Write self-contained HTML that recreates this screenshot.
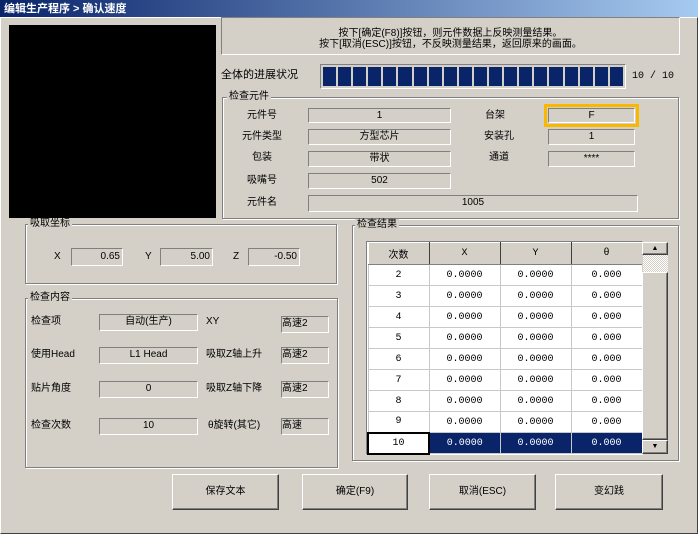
<!DOCTYPE html>
<html><head><meta charset="utf-8"><style>
*{box-sizing:border-box;margin:0;padding:0}
body{width:698px;height:534px;background:#d4d0c8;position:relative;overflow:hidden;font-family:"Liberation Sans","Noto Sans CJK SC",sans-serif;font-size:10px;color:#000}
.a{position:absolute}
.t{position:absolute;white-space:nowrap;line-height:12px}
.f{position:absolute;border:1px solid;border-color:#808080 #fff #fff #808080;text-align:center;line-height:13px;white-space:nowrap}
.g{position:absolute;border:1px solid #808080;box-shadow:1px 1px 0 #fff inset,1px 1px 0 #fff}
.gt{position:absolute;background:#d4d0c8;padding:0 2px;line-height:12px;top:-7px;left:4px}
.b{position:absolute;border:1px solid;border-color:#fff #404040 #404040 #fff;box-shadow:inset -1px -1px 0 #808080;text-align:center;line-height:33px}
table{border-collapse:collapse;position:absolute;left:367px;top:242px;background:#fff;table-layout:fixed;width:274px}
td{border:1px solid #c8c8c8;height:21px;text-align:center;font-family:"Liberation Mono","Noto Sans CJK SC",monospace;font-size:10px;overflow:hidden}
tr.h td{background:#d4d0c8;border-color:#fff #404040 #808080 #fff;height:22px}
tr.s td{background:#0a246a;color:#fff}
</style></head><body>
<div class="a" style="left:0;top:0;width:698px;height:17px;background:linear-gradient(90deg,#0a246a,#a6caf0)"></div>
<div class="t" style="left:4px;top:3px;color:#fff;font-weight:bold;font-size:11px">编辑生产程序 &gt; 确认速度</div>
<div class="a" style="left:0;top:17px;width:698px;height:517px;border:1px solid;border-color:#fff #404040 #404040 #fff"></div>
<div class="a" style="left:9px;top:25px;width:207px;height:193px;background:#000"></div>
<div class="a" style="left:221px;top:17px;width:459px;height:38px;border:1px solid;border-color:#808080 #fff #fff #808080"></div>
<div class="t" style="left:221px;top:28px;width:459px;text-align:center;line-height:11px">按下[确定(F8)]按钮，则元件数据上反映测量结果。<br>按下[取消(ESC)]按钮，不反映测量结果，返回原来的画面。</div>
<div class="t" style="left:221px;top:69px;font-size:11px">全体的进展状况</div>
<div class="a" style="left:320px;top:64px;width:306px;height:25px;border:1px solid;border-color:#808080 #fff #fff #808080;padding:2px;display:flex;gap:2px">
<div style="flex:1;background:#0a246a"></div><div style="flex:1;background:#0a246a"></div><div style="flex:1;background:#0a246a"></div><div style="flex:1;background:#0a246a"></div><div style="flex:1;background:#0a246a"></div><div style="flex:1;background:#0a246a"></div><div style="flex:1;background:#0a246a"></div><div style="flex:1;background:#0a246a"></div><div style="flex:1;background:#0a246a"></div><div style="flex:1;background:#0a246a"></div><div style="flex:1;background:#0a246a"></div><div style="flex:1;background:#0a246a"></div><div style="flex:1;background:#0a246a"></div><div style="flex:1;background:#0a246a"></div><div style="flex:1;background:#0a246a"></div><div style="flex:1;background:#0a246a"></div><div style="flex:1;background:#0a246a"></div><div style="flex:1;background:#0a246a"></div><div style="flex:1;background:#0a246a"></div><div style="flex:1;background:#0a246a"></div></div>
<div class="t" style="left:632px;top:71px;font-family:'Liberation Mono',monospace">10 / 10</div>

<div class="g" style="left:222px;top:97px;width:457px;height:122px"><span class="gt">检查元件</span></div>
<div class="t" style="left:240px;top:110px;width:44px;text-align:center">元件号</div>
<div class="f" style="left:308px;top:108px;width:143px;height:15px">1</div>
<div class="t" style="left:480px;top:110px;width:30px;text-align:center">台架</div>
<div class="a" style="left:544px;top:104px;width:95px;height:23px;border:3px solid #f8b800"></div>
<div class="f" style="left:548px;top:108px;width:87px;height:15px">F</div>
<div class="t" style="left:240px;top:131px;width:44px;text-align:center">元件类型</div>
<div class="f" style="left:308px;top:129px;width:143px;height:16px">方型芯片</div>
<div class="t" style="left:480px;top:131px;width:38px;text-align:center">安装孔</div>
<div class="f" style="left:548px;top:129px;width:87px;height:16px">1</div>
<div class="t" style="left:240px;top:152px;width:44px;text-align:center">包装</div>
<div class="f" style="left:308px;top:151px;width:143px;height:16px">带状</div>
<div class="t" style="left:480px;top:152px;width:38px;text-align:center">通道</div>
<div class="f" style="left:548px;top:151px;width:87px;height:16px">****</div>
<div class="t" style="left:240px;top:175px;width:44px;text-align:center">吸嘴号</div>
<div class="f" style="left:308px;top:173px;width:143px;height:16px">502</div>
<div class="t" style="left:240px;top:197px;width:44px;text-align:center">元件名</div>
<div class="f" style="left:308px;top:195px;width:330px;height:17px">1005</div>

<div class="g" style="left:25px;top:224px;width:312px;height:60px"><span class="gt" style="left:2px">吸取坐标</span></div>
<div class="t" style="left:54px;top:251px">X</div>
<div class="f" style="left:71px;top:248px;width:52px;height:18px;text-align:right;padding-right:2px;line-height:16px">0.65</div>
<div class="t" style="left:145px;top:251px">Y</div>
<div class="f" style="left:160px;top:248px;width:53px;height:18px;text-align:right;padding-right:2px;line-height:16px">5.00</div>
<div class="t" style="left:233px;top:251px">Z</div>
<div class="f" style="left:248px;top:248px;width:52px;height:18px;text-align:right;padding-right:2px;line-height:16px">-0.50</div>

<div class="g" style="left:25px;top:298px;width:313px;height:170px"><span class="gt" style="left:2px">检查内容</span></div>
<div class="t" style="left:31px;top:316px">检查项</div>
<div class="f" style="left:99px;top:314px;width:99px;height:17px">自动(生产)</div>
<div class="t" style="left:206px;top:316px">XY</div>
<div class="f" style="left:281px;top:316px;width:48px;height:17px;text-align:left">高速2</div>
<div class="t" style="left:31px;top:349px">使用Head</div>
<div class="f" style="left:99px;top:347px;width:99px;height:17px">L1 Head</div>
<div class="t" style="left:206px;top:349px">吸取Z轴上升</div>
<div class="f" style="left:281px;top:347px;width:48px;height:17px;text-align:left">高速2</div>
<div class="t" style="left:31px;top:383px">贴片角度</div>
<div class="f" style="left:99px;top:381px;width:99px;height:17px">0</div>
<div class="t" style="left:206px;top:383px">吸取Z轴下降</div>
<div class="f" style="left:281px;top:381px;width:48px;height:17px;text-align:left">高速2</div>
<div class="t" style="left:31px;top:420px">检查次数</div>
<div class="f" style="left:99px;top:418px;width:99px;height:17px">10</div>
<div class="t" style="left:208px;top:420px">θ旋转(其它)</div>
<div class="f" style="left:281px;top:418px;width:48px;height:17px;text-align:left">高速</div>

<div class="g" style="left:352px;top:225px;width:327px;height:236px"><span class="gt" style="left:2px">检查结果</span></div>
<div class="a" style="left:366px;top:241px;width:277px;height:214px;border:1px solid;border-color:#808080 #fff #fff #808080;background:#fff"></div>
<table>
<colgroup><col style="width:61px"><col style="width:71px"><col style="width:71px"><col style="width:71px"></colgroup>
<tr class="h"><td style="font-family:'Liberation Sans','Noto Sans CJK SC',sans-serif">次数</td><td>X</td><td>Y</td><td>θ</td></tr>
<tr><td>2</td><td>0.0000</td><td>0.0000</td><td>0.000</td></tr>
<tr><td>3</td><td>0.0000</td><td>0.0000</td><td>0.000</td></tr>
<tr><td>4</td><td>0.0000</td><td>0.0000</td><td>0.000</td></tr>
<tr><td>5</td><td>0.0000</td><td>0.0000</td><td>0.000</td></tr>
<tr><td>6</td><td>0.0000</td><td>0.0000</td><td>0.000</td></tr>
<tr><td>7</td><td>0.0000</td><td>0.0000</td><td>0.000</td></tr>
<tr><td>8</td><td>0.0000</td><td>0.0000</td><td>0.000</td></tr>
<tr><td>9</td><td>0.0000</td><td>0.0000</td><td>0.000</td></tr>
<tr class="s"><td style="background:#fff;color:#000;border:2px solid #000">10</td><td>0.0000</td><td>0.0000</td><td>0.000</td></tr>
</table>
<div class="a" style="left:642px;top:242px;width:26px;height:212px;background:#d4d0c8"></div>
<div class="b" style="left:642px;top:242px;width:26px;height:13px;line-height:11px;font-size:7px">▲</div>
<div class="a" style="left:643px;top:255px;width:25px;height:17px;background:repeating-conic-gradient(#fff 0 25%,#d4d0c8 0 50%) 0 0/2px 2px"></div>
<div class="b" style="left:642px;top:272px;width:26px;height:168px"></div>
<div class="b" style="left:642px;top:440px;width:26px;height:14px;line-height:12px;font-size:7px">▼</div>

<div class="b" style="left:172px;top:474px;width:107px;height:36px">保存文本</div>
<div class="b" style="left:302px;top:474px;width:106px;height:36px">确定(F9)</div>
<div class="b" style="left:429px;top:474px;width:107px;height:36px">取消(ESC)</div>
<div class="b" style="left:555px;top:474px;width:108px;height:36px">变幻践</div>
</body></html>
